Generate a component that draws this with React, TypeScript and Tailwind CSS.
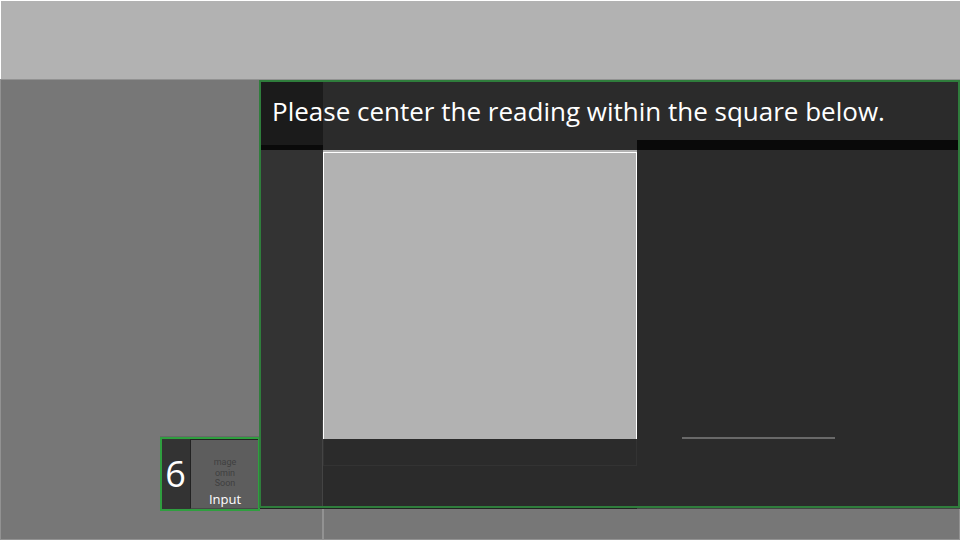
function InputBadge() {
  return (
    <div className="ml-[159px] w-[100px] border-t border-[#686868]">
      <div className="flex h-[74px] border-2 border-[#2f9e3f] bg-[#333333]">
        <div className="flex w-7 shrink-0 items-center justify-center pr-px text-[36px] leading-none text-white">
          <span className="-mt-px">6</span>
        </div>
        <div className="flex min-w-0 flex-1 flex-col items-center border-y border-l border-t-[#222222] border-b-[#484848] border-l-[#222222] bg-[#5d5d5d] pl-px">
          <div className="mt-[17px] flex h-[33px] w-[22px] flex-col items-center font-['Roboto',sans-serif] text-[9px] leading-[10.5px] text-[#404040]">
            <span>mage</span>
            <span>omin</span>
            <span>Soon</span>
          </div>
          <span className="mt-px text-[13px] leading-[16px] text-white">Input</span>
        </div>
      </div>
    </div>
  );
}

function ReadingPanel() {
  return (
    <section className="grid h-[428px] w-[701px] grid-cols-[62px_314px_1fr] border-2 border-[#2f7d3c] bg-[#2b2b2b]">
      <div className="flex flex-col bg-[#333333]">
        <h1 className="flex h-[63px] shrink-0 items-center bg-[#1b1b1b] pl-[11px] text-[26px] whitespace-nowrap text-white">
          <span className="relative z-10 -mt-1">Please center the reading within the square below.</span>
        </h1>
        <div className="h-[5px] shrink-0 bg-[#0a0a0a]" />
        <div className="h-[270px] shrink-0" />
        <div className="flex-1 border-r border-[#444444]" />
      </div>
      <div className="flex flex-col">
        <div className="h-[68px]" />
        <div className="h-[2px] bg-[#b2b2b2]" />
        <div className="h-[287px] border-x border-t border-white bg-[#b2b2b2]" />
        <div className="h-[27px] border-x border-b border-[#333333]" />
      </div>
      <div className="flex flex-col">
        <div className="h-[58px]" />
        <div className="h-[10px] bg-[#090909]" />
        <div className="mt-[287px] ml-[45px] h-[2px] w-[153px] bg-[#696969]" />
      </div>
    </section>
  );
}

export default function App() {
  return (
    <main className="flex h-[540px] w-[960px] flex-col overflow-hidden bg-[#777777] font-['Open_Sans',sans-serif]">
      <header className="h-[79px] border-t border-l border-white bg-[#b2b2b2]" />
      <div className="flex h-[461px] border border-r-0 border-[#929292]">
        <aside className="flex w-[258px] shrink-0 flex-col">
          <div className="h-[356px]" />
          <InputBadge />
        </aside>
        <div className="flex w-[701px] shrink-0 flex-col">
          <ReadingPanel />
          <div className="flex h-px shrink-0">
            <div className="w-px bg-[#2f9e3f]" />
            <div className="w-[377px] bg-[#222222]" />
            <div className="flex-1 bg-[#444444]" />
          </div>
          <div className="flex flex-1 border-r border-[#929292]">
            <div className="w-[65px] border-r-2 border-[#929292]" />
          </div>
        </div>
      </div>
    </main>
  );
}
